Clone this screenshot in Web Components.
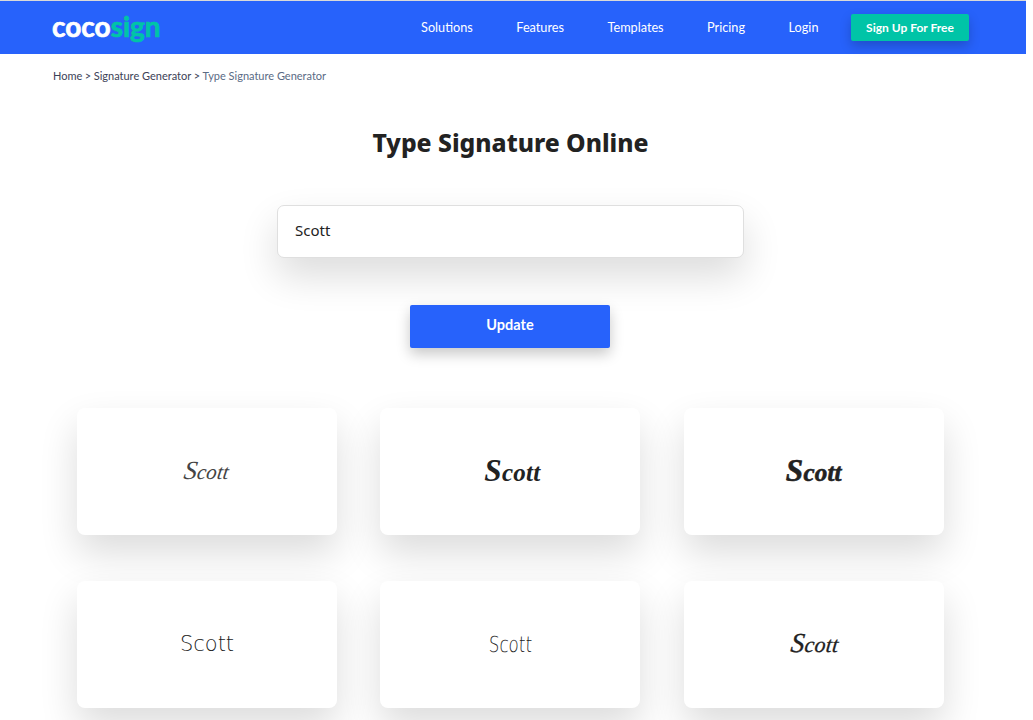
<!DOCTYPE html>
<html>
<head>
<meta charset="utf-8">
<title>Type Signature Online</title>
<style>
  html, body { margin: 0; padding: 0; background: #fff; overflow: hidden; height: 720px; }
  body { font-family: Lato, "Noto Sans", sans-serif; color: #222; }
</style>
</head>
<body>
<site-header></site-header>
<bread-crumbs></bread-crumbs>
<sign-form></sign-form>
<sign-grid>
  <sign-card kind="thin">Scott</sign-card>
  <sign-card kind="bold">Scott</sign-card>
  <sign-card kind="heavy">Scott</sign-card>
  <sign-card kind="hand">Scott</sign-card>
  <sign-card kind="narrow">Scott</sign-card>
  <sign-card kind="script">Scott</sign-card>
</sign-grid>

<script>
class SiteHeader extends HTMLElement {
  constructor() {
    super();
    this.attachShadow({ mode: "open" });
  }

  connectedCallback() {
    this.shadowRoot.innerHTML = `
      <style>
        :host { display: block; width: 1026px; border-top: 1px solid #d9d9d9; background: #2762fb; height: 53px; }
        .bar { display: flex; align-items: center; height: 100%; padding: 0 57px 0 52px; box-sizing: border-box; }
        .logo { font: 700 28px/1 Lato, sans-serif; -webkit-text-stroke: .7px #fff; color: #fff; flex: 1; position: relative; top: -2px; }
        .logo span { color: #00c4a7; -webkit-text-stroke-color: #00c4a7; }
        nav { display: flex; align-items: center; gap: 43.5px; font: 400 12.7px Lato, sans-serif; color: #fff; }
        nav > span:not(.cta) { padding-bottom: 2px; }
        .cta { margin-left: -11px; background: #00c4a7; color: #fff; font-weight: 700; font-size: 12px; width: 118px; height: 27px; padding-bottom: 1px; box-sizing: border-box; display: flex; align-items: center; justify-content: center; border-radius: 2px; box-shadow: 0 5px 12px rgba(0,0,0,.2); }
      </style>
      <div class="bar">
        <div class="logo">coco<span>sign</span></div>
        <nav>
          <span>Solutions</span><span>Features</span><span>Templates</span><span>Pricing</span><span>Login</span>
          <span class="cta">Sign Up For Free</span>
        </nav>
      </div>`;
  }
}

class BreadCrumbs extends HTMLElement {
  constructor() {
    super();
    this.attachShadow({ mode: "open" });
  }

  connectedCallback() {
    this.shadowRoot.innerHTML = `
      <style>
        :host { display: flex; gap: 2.5px; padding: 14px 0 0 53px; font: 400 11px/16px Lato, sans-serif; color: #3c4257; }
        .last { color: #5a6b85; }
      </style>
      <span>Home</span><span>&gt;</span><span>Signature Generator</span><span>&gt;</span><span class="last">Type Signature Generator</span>`;
  }
}

class SignForm extends HTMLElement {
  constructor() {
    super();
    this.attachShadow({ mode: "open" });
  }

  connectedCallback() {
    this.shadowRoot.innerHTML = `
      <style>
        :host { display: flex; flex-direction: column; align-items: center; width: 1021px; }
        h1 { margin: 0; padding-top: 42px; font: 800 24.7px/34px "Noto Sans", sans-serif; color: #222; }
        .field { margin-top: 45px; width: 467px; height: 53px; box-sizing: border-box; border: 1px solid #dfdfdf; border-radius: 7px; padding: 0 17px 4px; display: flex; align-items: center; font: 400 15px "Noto Sans", sans-serif; color: #222; box-shadow: 0 18px 38px rgba(0,0,0,.14); background: #fff; }
        .btn { margin: 47px 1px 0 0; width: 200px; height: 43px; padding-bottom: 4px; box-sizing: border-box; background: #2762fb; color: #fff; border-radius: 2px; display: flex; align-items: center; justify-content: center; font: 700 14.5px Lato, sans-serif; box-shadow: 0 6px 14px rgba(0,0,0,.22); }
      </style>
      <h1>Type Signature Online</h1>
      <div class="field">Scott</div>
      <div class="btn">Update</div>`;
  }
}

class SignGrid extends HTMLElement {
  constructor() {
    super();
    this.attachShadow({ mode: "open" });
  }

  connectedCallback() {
    this.shadowRoot.innerHTML = `
      <style>
        :host { display: grid; grid-template-columns: repeat(3, 260px); column-gap: 43.4px; row-gap: 46px; padding: 60px 0 0 77px; }
      </style>
      <slot></slot>`;
  }
}

class SignCard extends HTMLElement {
  constructor() {
    super();
    this.attachShadow({ mode: "open" });
  }

  connectedCallback() {
    this.shadowRoot.innerHTML = `
      <style>
        :host { display: flex; align-items: center; justify-content: center; height: 127px; background: #fff; border-radius: 8px; box-shadow: 0 18px 38px rgba(0,0,0,.14); }
        span { display: inline-block; color: #222; font-family: "Liberation Serif", serif; font-style: italic; line-height: 1; }
        span::first-letter { font-size: 1.25em; }
        :host([kind="thin"]) span { font-size: 21px; color: #444; letter-spacing: .1px; transform: skewX(-8deg); }
        :host([kind="bold"]) span { font-size: 25px; font-weight: 700; letter-spacing: .3px; transform: translate(2px, -1px); }
        :host([kind="heavy"]) span { font-size: 25px; font-weight: 700; letter-spacing: .2px; -webkit-text-stroke: .6px #222; transform: translateY(-1px); }
        :host([kind="hand"]) span { font: 200 21px/1 "DejaVu Sans", sans-serif; }
        :host([kind="hand"]) span::first-letter { font-size: 1em; }
        :host([kind="narrow"]) span { font: 200 22px/1 "DejaVu Sans", sans-serif; transform: scaleX(.76) skewX(-3deg); }
        :host([kind="narrow"]) span::first-letter { font-size: 1em; }
        :host([kind="script"]) span { font-size: 22px; letter-spacing: .2px; -webkit-text-stroke: .3px #222; transform: translate(1px, -2px) skewX(-6deg); }
      </style>
      <span><slot></slot></span>`;
  }
}

customElements.define("site-header", SiteHeader);
customElements.define("bread-crumbs", BreadCrumbs);
customElements.define("sign-form", SignForm);
customElements.define("sign-grid", SignGrid);
customElements.define("sign-card", SignCard);
</script>
</body>
</html>
